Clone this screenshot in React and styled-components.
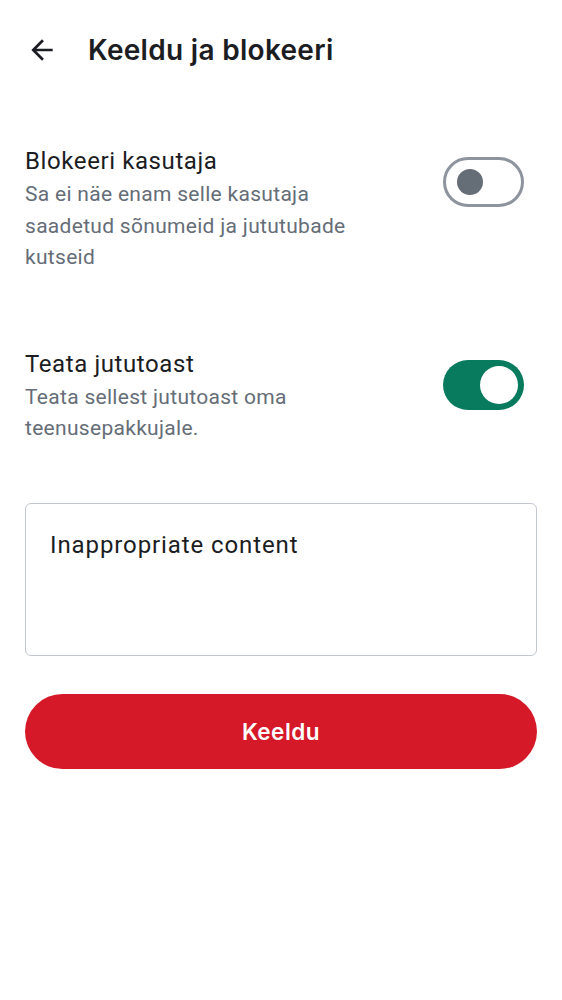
import React from "react";
import styled, { createGlobalStyle } from "styled-components";

const Global = createGlobalStyle`
  html, body { margin: 0; padding: 0; background: #ffffff; }
  body { font-family: Roboto, "Noto Sans", sans-serif; -webkit-font-smoothing: antialiased; }
  * { box-sizing: border-box; }
`;

const Page = styled.div`
  width: 562px;
  min-height: 1000px;
  background: #fff;
  display: flex;
  flex-direction: column;
`;

const Header = styled.header`
  height: 100px;
  display: flex;
  align-items: center;
  gap: 30px;
  padding-left: 26px;
`;

const BackButton = styled.button`
  border: 0;
  background: none;
  padding: 0;
  width: 32px;
  height: 32px;
  display: flex;
  color: #1b1d22;
`;

const Title = styled.h1`
  margin: 0;
  font-family: Inter, Roboto, sans-serif;
  font-weight: 600;
  font-size: 28px;
  letter-spacing: 0.3px;
  color: #1b1d22;
`;

const Content = styled.main`
  padding: 0 25px;
  display: flex;
  flex-direction: column;
`;

const Row = styled.section`
  display: flex;
  align-items: flex-start;
  justify-content: space-between;
  margin-top: ${(p) => p.$top}px;
`;

const TextCol = styled.div`
  width: 352px;
  display: flex;
  flex-direction: column;
  gap: 4px;
`;

const RowTitle = styled.div`
  font-size: 24px;
  line-height: 28px;
  letter-spacing: 0.6px;
  color: #1b1d22;
`;

const RowSub = styled.div`
  font-size: 21px;
  line-height: 31.5px;
  letter-spacing: 0.3px;
  color: #656d77;
`;

const Switch = styled.div`
  margin-top: 10px;
  margin-right: 13px;
  width: 81px;
  height: 50px;
  border-radius: 25px;
  flex-shrink: 0;
  display: flex;
  align-items: center;
  justify-content: ${(p) => (p.$on ? "flex-end" : "flex-start")};
  padding: ${(p) => (p.$on ? "0 6px" : "0 11px")};
  background: ${(p) => (p.$on ? "#087a5e" : "#ffffff")};
  border: ${(p) => (p.$on ? "none" : "3px solid #8d949e")};
`;

const Thumb = styled.div`
  width: ${(p) => (p.$on ? 38 : 26)}px;
  height: ${(p) => (p.$on ? 38 : 26)}px;
  border-radius: 50%;
  background: ${(p) => (p.$on ? "#ffffff" : "#656d77")};
`;

const ReasonBox = styled.div`
  margin-top: 58px;
  height: 153px;
  border: 1.5px solid #c2c7cf;
  border-radius: 6px;
  padding: 27px 24px;
  font-size: 24px;
  line-height: 28px;
  letter-spacing: 0.9px;
  color: #1b1d22;
`;

const DangerButton = styled.button`
  margin-top: 38px;
  height: 75px;
  width: 100%;
  border: 0;
  border-radius: 38px;
  background: #d51928;
  color: #ffffff;
  font-family: Inter, Roboto, sans-serif;
  font-weight: 600;
  font-size: 22.5px;
  letter-spacing: 0.5px;
`;

function BackArrow() {
  return (
    <svg width="32" height="32" viewBox="0 0 24 24" fill="currentColor">
      <path d="M20 11H7.83l5.59-5.59L12 4l-8 8 8 8 1.41-1.41L7.83 13H20v-2z" />
    </svg>
  );
}

export default function App() {
  return (
    <Page>
      <Global />
      <Header>
        <BackButton aria-label="Tagasi">
          <BackArrow />
        </BackButton>
        <Title>Keeldu ja blokeeri</Title>
      </Header>
      <Content>
        <Row $top={47}>
          <TextCol>
            <RowTitle>Blokeeri kasutaja</RowTitle>
            <RowSub>Sa ei näe enam selle kasutaja saadetud sõnumeid ja jututubade kutseid</RowSub>
          </TextCol>
          <Switch>
            <Thumb />
          </Switch>
        </Row>
        <Row $top={76}>
          <TextCol>
            <RowTitle>Teata jututoast</RowTitle>
            <RowSub>Teata sellest jututoast oma teenusepakkujale.</RowSub>
          </TextCol>
          <Switch $on>
            <Thumb $on />
          </Switch>
        </Row>
        <ReasonBox>Inappropriate content</ReasonBox>
        <DangerButton>Keeldu</DangerButton>
      </Content>
    </Page>
  );
}
